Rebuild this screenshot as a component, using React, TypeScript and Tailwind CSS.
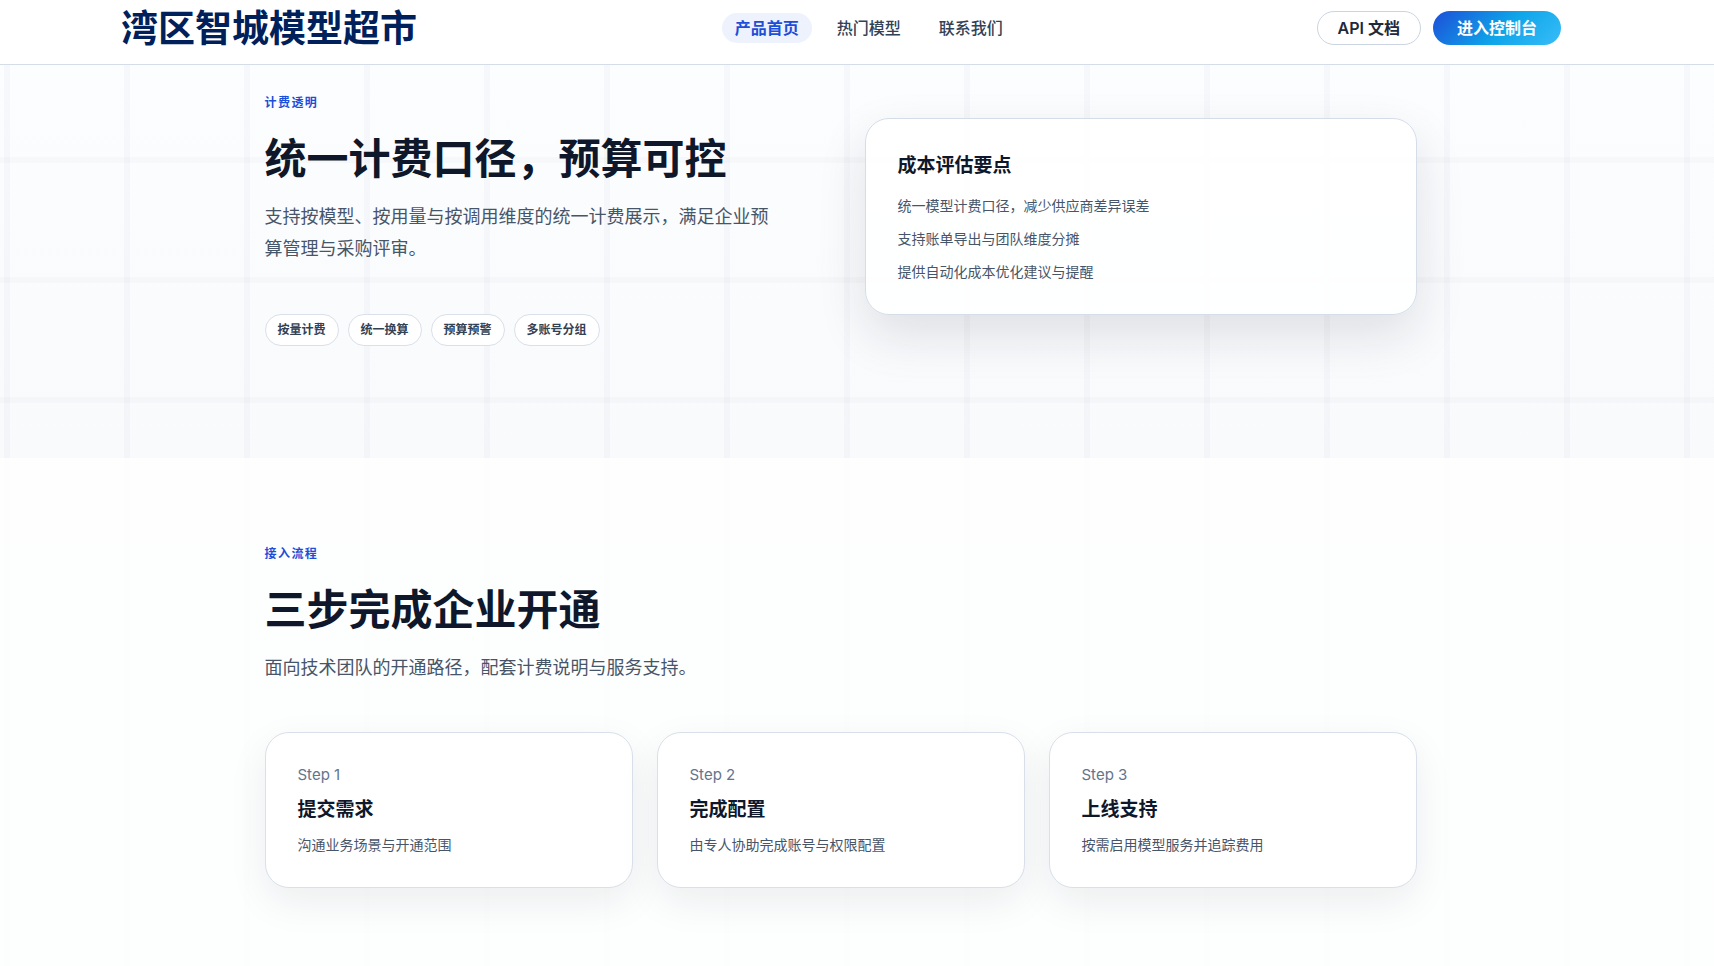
const navItems = [
  { label: "产品首页", href: "#home", active: true },
  { label: "热门模型", href: "#models", active: false },
  { label: "联系我们", href: "#contact", active: false },
];

const tags = ["按量计费", "统一换算", "预算预警", "多账号分组"];

const costPoints = [
  "统一模型计费口径，减少供应商差异误差",
  "支持账单导出与团队维度分摊",
  "提供自动化成本优化建议与提醒",
];

const steps = [
  { step: "Step 1", title: "提交需求", text: "沟通业务场景与开通范围" },
  { step: "Step 2", title: "完成配置", text: "由专人协助完成账号与权限配置" },
  { step: "Step 3", title: "上线支持", text: "按需启用模型服务并追踪费用" },
];

function Header() {
  return (
    <header className="border-b border-[#d5dde8] bg-white">
      <div className="mx-auto flex h-16 max-w-[1440px] items-center justify-between px-4 pb-2">
        <a
          href="#home"
          className="-ml-8 w-[300px] shrink-0 pt-[2px] text-[37px] leading-[40px] font-bold whitespace-nowrap text-[#00205b]"
        >
          湾区智城模型超市
        </a>
        <nav className="flex gap-3">
          {navItems.map((item) => (
            <a
              key={item.label}
              href={item.href}
              className={
                "rounded-full px-[13px] text-base leading-[30px] whitespace-nowrap " +
                (item.active
                  ? "bg-[#edf2fd] font-semibold text-[#1d4ed8]"
                  : "font-medium text-[#334155]")
              }
            >
              {item.label}
            </a>
          ))}
        </nav>
        <div className="flex gap-3">
          <button className="h-[34px] rounded-full border border-[#cbd5e1] bg-white px-5 text-base leading-8 font-semibold whitespace-nowrap text-[#1e293b]">
            API 文档
          </button>
          <button className="h-[34px] rounded-full bg-linear-[135deg,#1d4ed8,#0ea5e9_55%,#38bdf8] px-6 text-base leading-8 font-bold whitespace-nowrap text-white">
            进入控制台
          </button>
        </div>
      </div>
    </header>
  );
}

function SectionTitle({ eyebrow, title, text }) {
  return (
    <div>
      <p className="text-xs leading-4 font-semibold tracking-[0.12em] text-[#1d4ed8]">
        {eyebrow}
      </p>
      <h2 className="mt-[23px] text-[42px] leading-[50px] font-bold text-[#0f172a]">
        {title}
      </h2>
      <p className="mt-[17px] max-w-[520px] text-lg leading-8 text-[#475569]">
        {text}
      </p>
    </div>
  );
}

function Billing() {
  return (
    <section className="bg-[repeating-linear-gradient(90deg,transparent_0_4px,rgba(15,23,42,0.022)_4px_10px,transparent_10px_120px),repeating-linear-gradient(180deg,transparent_0_92px,rgba(15,23,42,0.018)_92px_98px,transparent_98px_120px),linear-gradient(180deg,#fcfdff,#f9fafc)] pt-[30px] pr-[33px] pb-28">
      <div className="mx-auto grid max-w-6xl grid-cols-2 items-start gap-12">
        <div>
          <SectionTitle
            eyebrow="计费透明"
            title="统一计费口径，预算可控"
            text="支持按模型、按用量与按调用维度的统一计费展示，满足企业预算管理与采购评审。"
          />
          <ul className="mt-[49px] flex gap-[9px]">
            {tags.map((tag) => (
              <li
                key={tag}
                className="rounded-full border border-[#d9e0ea] bg-white px-3 text-xs leading-[30px] font-semibold text-[#334155]"
              >
                {tag}
              </li>
            ))}
          </ul>
        </div>
        <div className="mt-[23px] rounded-3xl border border-[#d5dde8] bg-white/90 p-8 shadow-[0_20px_50px_rgba(15,23,42,0.12)]">
          <h3 className="text-[19px] leading-[30px] font-semibold text-[#0f172a]">
            成本评估要点
          </h3>
          <ul className="mt-[15px] flex flex-col gap-[13px]">
            {costPoints.map((point) => (
              <li key={point} className="text-sm leading-5 text-[#475569]">
                {point}
              </li>
            ))}
          </ul>
        </div>
      </div>
    </section>
  );
}

function Steps() {
  return (
    <section className="flex-1 bg-[repeating-linear-gradient(90deg,transparent_0_4px,rgba(15,23,42,0.004)_4px_10px,transparent_10px_120px),linear-gradient(180deg,#fefefe,#fdfefe)] pt-[88px] pr-[33px] pb-19">
      <div className="mx-auto max-w-6xl">
        <SectionTitle
          eyebrow="接入流程"
          title="三步完成企业开通"
          text="面向技术团队的开通路径，配套计费说明与服务支持。"
        />
        <div className="mt-12 grid grid-cols-3 gap-6">
          {steps.map((item) => (
            <div
              key={item.step}
              className="rounded-3xl border border-[#d9e0ea] bg-white p-8 shadow-[0_14px_40px_rgba(15,23,42,0.07)]"
            >
              <p className="text-[15px] leading-5 text-[#64748b]">
                {item.step}
              </p>
              <h3 className="mt-[10px] text-[19px] leading-[30px] font-semibold text-[#0f172a]">
                {item.title}
              </h3>
              <p className="mt-[10px] text-sm leading-5 text-[#475569]">
                {item.text}
              </p>
            </div>
          ))}
        </div>
      </div>
    </section>
  );
}

function App() {
  return (
    <div className="flex min-h-screen flex-col bg-white font-[Inter,'Noto_Sans_CJK_SC',sans-serif]">
      <Header />
      <Billing />
      <Steps />
    </div>
  );
}

export default App;
